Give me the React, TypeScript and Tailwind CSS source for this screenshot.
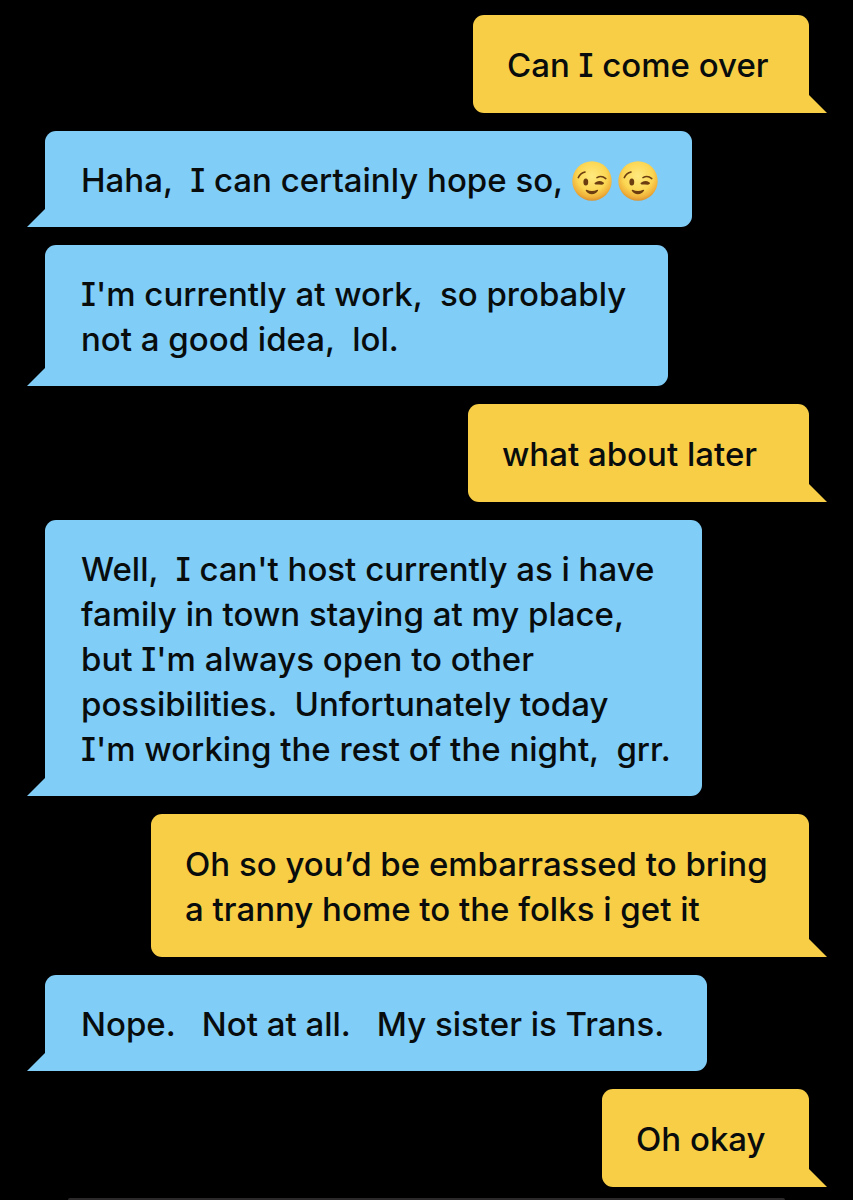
import { useId } from 'react';
import clsx from 'clsx';

type Message = {
  id: number;
  from: 'me' | 'them';
  lines: string[];
  width: string;
  winks?: number;
};

const messages: Message[] = [
  { id: 1, from: 'me', lines: ['Can I come over'], width: 'w-[336px]' },
  { id: 2, from: 'them', lines: ['Haha,  I can certainly hope so, '], width: 'w-[647px]', winks: 2 },
  {
    id: 3,
    from: 'them',
    lines: ["I'm currently at work,  so probably", 'not a good idea,  lol.'],
    width: 'w-[623px]',
  },
  { id: 4, from: 'me', lines: ['what about later'], width: 'w-[341px]' },
  {
    id: 5,
    from: 'them',
    lines: [
      "Well,  I can't host currently as i have",
      'family in town staying at my place,',
      "but I'm always open to other",
      'possibilities.  Unfortunately today',
      "I'm working the rest of the night,  grr.",
    ],
    width: 'w-[657px]',
  },
  {
    id: 6,
    from: 'me',
    lines: ['Oh so you’d be embarrassed to bring', 'a tranny home to the folks i get it'],
    width: 'w-[658px]',
  },
  { id: 7, from: 'them', lines: ['Nope.   Not at all.   My sister is Trans.'], width: 'w-[662px]' },
  { id: 8, from: 'me', lines: ['Oh okay'], width: 'w-[207px]' },
];

function Wink() {
  const id = useId();

  return (
    <svg viewBox="0 0 40 40" role="img" aria-label="winking face" className="w-10 h-10 shrink-0">
      <defs>
        <radialGradient id={id} cx="50%" cy="38%" r="63%">
          <stop offset="0" stopColor="#ffea80" />
          <stop offset="0.6" stopColor="#fbd653" />
          <stop offset="0.85" stopColor="#f0b13a" />
          <stop offset="1" stopColor="#d88f2e" />
        </radialGradient>
      </defs>
      <circle cx="20" cy="20" r="19.7" fill={`url(#${id})`} />
      <g fill="none" stroke="#6b3d10" strokeLinecap="round" strokeLinejoin="round">
        <path d="M6.3 16.6C7.8 13.4 10 11.7 13 11" strokeWidth="1.6" />
        <path d="M25 16.6C28 14.8 31 15.2 33.8 17.6" strokeWidth="1.6" />
        <path d="M23.5 22.4C26 20.4 28.5 20.6 31 22.2M23.5 22.4L30 22.8" strokeWidth="1.9" />
        <path d="M14.3 29.4C17 33.6 22.8 33.6 25.5 29.4C22 31 18 31 14.3 29.4Z" fill="#6b3d10" strokeWidth="1.2" />
      </g>
      <ellipse cx="13.8" cy="21" rx="2.4" ry="3.5" fill="#6b3d10" />
    </svg>
  );
}

function Bubble({ message }: { message: Message }) {
  const mine = message.from === 'me';

  return (
    <li
      className={clsx(
        'relative max-w-full rounded-t-[11px]',
        message.width,
        mine
          ? 'self-end rounded-bl-[11px] bg-[#f8ce46] pt-7 pl-[34px] pb-[25px]'
          : 'self-start rounded-br-[11px] bg-[#80cdf8] pt-[27px] pl-9 pb-6'
      )}
    >
      {message.lines.map((line) => (
        <p key={line} className="flex items-center whitespace-pre">
          {line}
          {message.winks && (
            <span className="flex gap-1.5">
              {Array.from({ length: message.winks }, (_, i) => (
                <Wink key={i} />
              ))}
            </span>
          )}
        </p>
      ))}
      {/* Tail */}
      <span
        className={clsx(
          'absolute bottom-0 w-[18px] h-[18px]',
          mine
            ? 'left-full bg-[#f8ce46] [clip-path:polygon(0_0,100%_100%,0_100%)]'
            : 'right-full bg-[#80cdf8] [clip-path:polygon(100%_0,100%_100%,0_100%)]'
        )}
      />
    </li>
  );
}

export default function App() {
  return (
    <main className="flex min-h-screen flex-col justify-between overflow-hidden bg-black text-[#080c0d]">
      <ul className="flex flex-col gap-[18px] pt-[15px] pl-[45px] pr-11 font-['Inter',sans-serif] text-[33px] leading-[45px] font-medium [font-feature-settings:'cv08']">
        {messages.map((message) => (
          <Bubble key={message.id} message={message} />
        ))}
      </ul>
      {/* Top edge of the reply box */}
      <div className="mx-[68px] h-0.5 rounded-t-full bg-[#2b2929]" />
    </main>
  );
}
